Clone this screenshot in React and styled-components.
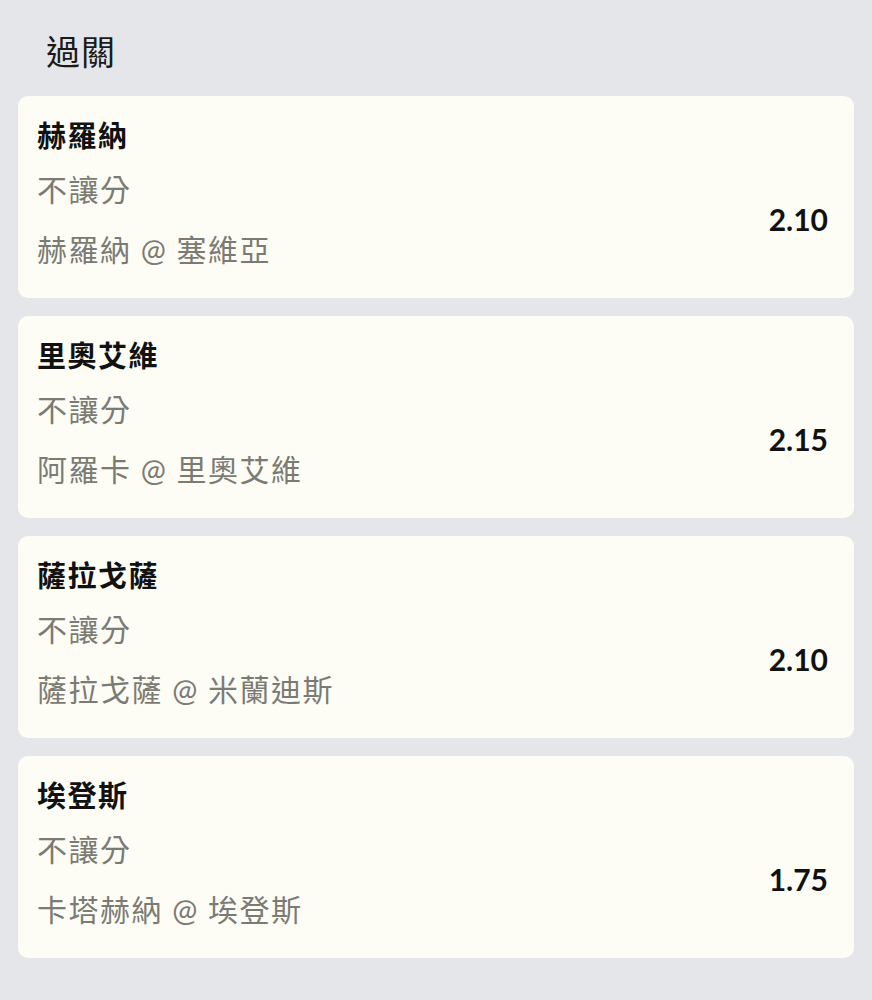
import React from "react";
import styled, { createGlobalStyle } from "styled-components";

const Global = createGlobalStyle`
  html, body { margin: 0; padding: 0; background: #e5e6e9; }
  body { font-family: Lato, "Noto Sans CJK TC", "Noto Sans", sans-serif; }
`;

const Page = styled.div`
  width: 872px;
  min-height: 1000px;
  box-sizing: border-box;
  padding: 30px 18px 40px;
  background: #e5e6e9;
`;

const Title = styled.h1`
  margin: 0 0 22px 28px;
  font-size: 34px;
  line-height: 44px;
  letter-spacing: 1px;
  font-weight: 400;
  color: #1a1a1a;
`;

const List = styled.div`
  display: flex;
  flex-direction: column;
  gap: 18px;
`;

const Card = styled.div`
  background: #fdfdf6;
  border-radius: 10px;
  height: 202px;
  box-sizing: border-box;
  padding: 20px 26px 0 19px;
  display: flex;
  flex-direction: column;
`;

const Name = styled.div`
  font-size: 29px;
  line-height: 40px;
  letter-spacing: 1.5px;
  font-weight: 700;
  color: #111;
`;

const Row = styled.div`
  display: flex;
  align-items: center;
  justify-content: space-between;
  margin-top: 13px;
`;

const Info = styled.div`
  display: flex;
  flex-direction: column;
  gap: 20px;
`;

const Sub = styled.div`
  font-size: 30px;
  line-height: 40px;
  letter-spacing: 1.5px;
  color: #7b7b74;
`;

const Odds = styled.div`
  font-size: 30px;
  font-weight: 700;
  color: #111;
`;

const data = [
  { name: "赫羅納", type: "不讓分", match: "赫羅納 @ 塞維亞", odds: "2.10" },
  { name: "里奧艾維", type: "不讓分", match: "阿羅卡 @ 里奧艾維", odds: "2.15" },
  { name: "薩拉戈薩", type: "不讓分", match: "薩拉戈薩 @ 米蘭迪斯", odds: "2.10" },
  { name: "埃登斯", type: "不讓分", match: "卡塔赫納 @ 埃登斯", odds: "1.75" },
];

export default function App() {
  return (
    <Page>
      <Global />
      <Title>過關</Title>
      <List>
        {data.map((d, i) => (
          <Card key={i}>
            <Name>{d.name}</Name>
            <Row>
              <Info>
                <Sub>{d.type}</Sub>
                <Sub>{d.match}</Sub>
              </Info>
              <Odds>{d.odds}</Odds>
            </Row>
          </Card>
        ))}
      </List>
    </Page>
  );
}
